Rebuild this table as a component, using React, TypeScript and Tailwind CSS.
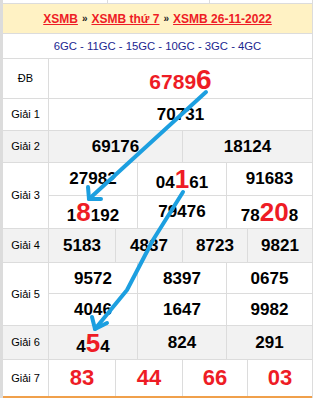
const RED = 'text-[#ee1c25]';

type Cell = { pre?: string; big?: string; post?: string };

function Num({ c, red = false, size = 'text-[17px]' }: { c: Cell; red?: boolean; size?: string }) {
  return (
    <span className={`font-bold leading-none ${size} ${red ? RED : 'text-black'}`}>
      {c.pre}
      {c.big && <span className={`text-[26px] ${RED}`}>{c.big}</span>}
      {c.post}
    </span>
  );
}

function Label({ text, grey = false }: { text: string; grey?: boolean }) {
  return (
    <div
      className={`w-[46px] shrink-0 border-r border-[#dcdcdc] flex items-center justify-center text-[11px] text-black ${
        grey ? 'bg-[#f2f2f2]' : 'bg-white'
      }`}
    >
      {text}
    </div>
  );
}

function Arrows() {
  return (
    <svg className="absolute left-0 top-0 pointer-events-none" width="316" height="398" viewBox="0 0 316 398">
      <g stroke="#1c9fe0" strokeWidth="4" strokeLinecap="round" strokeLinejoin="round" fill="none">
        <path d="M206 92 L89 199" />
        <path d="M88 187 L89 199 L101 199" />
        <path d="M183 192 L153 240 L127 290 L95 329" />
        <path d="M92 317 L95 329 L107 323" />
      </g>
    </svg>
  );
}

export default function App() {
  const line = 'border-[#dcdcdc]';
  return (
    <div className="relative w-[316px] h-[398px] overflow-hidden bg-white font-['Liberation_Sans',Arial,sans-serif]">
      <div className={`w-[313px] h-full border-l-[3px] border-r ${line} flex flex-col`}>
        {/* tail of the table above */}
        <div className={`h-[4px] flex border-b ${line}`}>
          <div className={`w-[105px] border-r ${line}`} />
          <div className={`w-[102px] border-r ${line}`} />
        </div>

        <div className={`h-[30px] shrink-0 border-b ${line} bg-[#fff2c4] flex items-center justify-center text-[12px] font-bold`}>
          <span className={`${RED} underline`}>XSMB</span>
          <span className="text-[#222] text-[10px] mx-[4px]">»</span>
          <span className={`${RED} underline`}>XSMB thứ 7</span>
          <span className="text-[#222] text-[10px] mx-[4px]">»</span>
          <span className={`${RED} underline`}>XSMB 26-11-2022</span>
        </div>

        <div className={`h-[25px] shrink-0 border-b ${line} flex items-center justify-center text-[11.3px] text-[#1b2690]`}>
          6GC - 11GC - 15GC - 10GC - 3GC - 4GC
        </div>

        {/* ĐB */}
        <div className={`h-[40px] shrink-0 flex border-b ${line}`}>
          <Label text="ĐB" />
          <div className="flex-1 flex items-center justify-center pt-[2px]">
            <span className={`font-bold leading-none text-[21px] ${RED}`}>
              6789<span className="text-[28px]">6</span>
            </span>
          </div>
        </div>

        {/* Giải 1 */}
        <div className={`h-[32px] shrink-0 flex border-b ${line}`}>
          <Label text="Giải 1" />
          <div className="flex-1 flex items-center justify-center">
            <Num c={{ pre: '70731' }} />
          </div>
        </div>

        {/* Giải 2 */}
        <div className={`h-[32px] shrink-0 flex border-b ${line} bg-[#f2f2f2]`}>
          <Label text="Giải 2" grey />
          <div className={`w-[134px] border-r ${line} flex items-center justify-center`}>
            <Num c={{ pre: '69176' }} />
          </div>
          <div className="flex-1 flex items-center justify-center">
            <Num c={{ pre: '18124' }} />
          </div>
        </div>

        {/* Giải 3 */}
        <div className={`h-[66px] shrink-0 flex border-b ${line}`}>
          <Label text="Giải 3" />
          <div className="flex-1 grid grid-cols-[89px_89px_1fr] grid-rows-2">
            {[
              { pre: '27982' },
              { pre: '04', big: '1', post: '61' },
              { pre: '91683' },
              { pre: '1', big: '8', post: '192' },
              { pre: '79476' },
              { pre: '78', big: '20', post: '8' },
            ].map((c, i) => (
              <div
                key={i}
                className={`flex items-center justify-center ${i % 3 !== 2 ? `border-r ${line}` : ''} ${
                  i < 3 ? `border-b ${line}` : ''
                }`}
              >
                <Num c={c} />
              </div>
            ))}
          </div>
        </div>

        {/* Giải 4 */}
        <div className={`h-[34px] shrink-0 flex border-b ${line} bg-[#f2f2f2]`}>
          <Label text="Giải 4" grey />
          <div className="flex-1 grid grid-cols-[67px_67px_65px_1fr]">
            {['5183', '4837', '8723', '9821'].map((n, i) => (
              <div key={n} className={`flex items-center justify-center ${i < 3 ? `border-r ${line}` : ''}`}>
                <Num c={{ pre: n }} />
              </div>
            ))}
          </div>
        </div>

        {/* Giải 5 */}
        <div className={`h-[63px] shrink-0 flex border-b ${line}`}>
          <Label text="Giải 5" />
          <div className="flex-1 grid grid-cols-[89px_89px_1fr] grid-rows-2">
            {['9572', '8397', '0675', '4046', '1647', '9982'].map((n, i) => (
              <div
                key={n}
                className={`flex items-center justify-center ${i % 3 !== 2 ? `border-r ${line}` : ''} ${
                  i < 3 ? `border-b ${line}` : ''
                }`}
              >
                <Num c={{ pre: n }} />
              </div>
            ))}
          </div>
        </div>

        {/* Giải 6 */}
        <div className={`h-[34px] shrink-0 flex border-b ${line} bg-[#f2f2f2]`}>
          <Label text="Giải 6" grey />
          <div className="flex-1 grid grid-cols-[89px_89px_1fr]">
            {[{ pre: '4', big: '5', post: '4' }, { pre: '824' }, { pre: '291' }].map((c, i) => (
              <div key={i} className={`flex items-center justify-center ${i < 2 ? `border-r ${line}` : ''}`}>
                <Num c={c} />
              </div>
            ))}
          </div>
        </div>

        {/* Giải 7 */}
        <div className="h-[38px] shrink-0 flex border-b-2 border-[#f0a04b]">
          <Label text="Giải 7" />
          <div className="flex-1 grid grid-cols-[67px_67px_65px_1fr]">
            {['83', '44', '66', '03'].map((n, i) => (
              <div key={n} className={`flex items-center justify-center ${i < 3 ? `border-r ${line}` : ''}`}>
                <Num c={{ pre: n }} red size="text-[22px]" />
              </div>
            ))}
          </div>
        </div>
      </div>
      <Arrows />
    </div>
  );
}
